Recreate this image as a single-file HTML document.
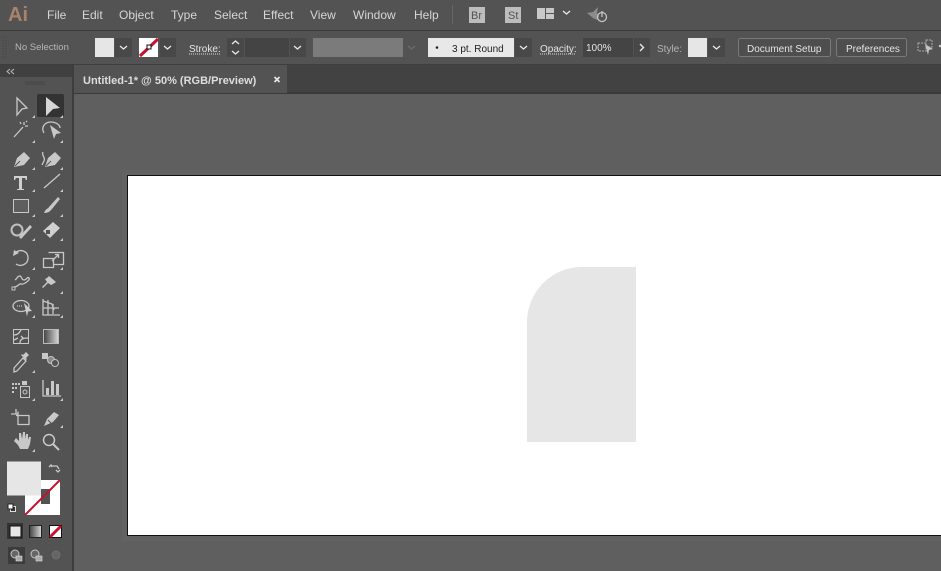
<!DOCTYPE html>
<html><head><meta charset="utf-8"><style>
html,body{margin:0;padding:0;background:#5f5f5f}
svg{display:block}
text{font-family:"Liberation Sans",sans-serif}
.m{font-size:12px;fill:#d6d6d6}
.c{font-size:10px;fill:#e4e4e4}
.i{fill:none;stroke:#c8c8c8;stroke-width:1.3}
.f{fill:#c8c8c8;stroke:none}
.chev{fill:none;stroke:#e6e6e6;stroke-width:1.4}
</style></head><body>
<svg width="941" height="571" viewBox="0 0 941 571" xmlns="http://www.w3.org/2000/svg">
<rect width="941" height="571" fill="#5f5f5f"/>
<!-- menu bar -->
<rect width="941" height="30" fill="#535353"/>
<rect y="30" width="941" height="1" fill="#3c3c3c"/>
<text x="8" y="21" style="font-size:20px;font-weight:bold" fill="#a8836a">Ai</text>
<text class="m" x="47" y="19">File</text>
<text class="m" x="82" y="19">Edit</text>
<text class="m" x="119" y="19">Object</text>
<text class="m" x="171" y="19">Type</text>
<text class="m" x="214" y="19">Select</text>
<text class="m" x="263" y="19">Effect</text>
<text class="m" x="310" y="19">View</text>
<text class="m" x="353" y="19">Window</text>
<text class="m" x="414" y="19">Help</text>
<rect x="452" y="5" width="1" height="19" fill="#666"/>
<rect x="469" y="7" width="16" height="16" fill="#bdbdbd"/>
<text x="471" y="19" style="font-size:11px" fill="#535353">Br</text>
<rect x="505" y="7" width="16" height="16" fill="#bdbdbd"/>
<text x="508" y="19" style="font-size:11px" fill="#535353">St</text>
<path class="f" d="M537 8h8v11h-8zM546 8h8v5h-8zM546 14h8v5h-8z"/>
<path class="chev" d="M563 11l3.500 3 3.500-3"/>
<path d="M587 13l6-1 5-5-1 6 2 3-2 4-4-2z" fill="#8b8b8b"/>
<circle cx="602" cy="17" r="4.500" fill="none" stroke="#c4c4c4" stroke-width="1.300"/>
<path d="M602 11v6" stroke="#c4c4c4" stroke-width="1.300"/>
<!-- control bar -->
<rect y="31" width="941" height="33" fill="#535353"/>
<rect y="64" width="941" height="1" fill="#3e3e3e"/>
<path d="M3 36v24M6 36v24" stroke="#464646" stroke-dasharray="1 1"/>
<text x="15" y="50" style="font-size:9.500px" fill="#b6b6b6">No Selection</text>
<rect x="95" y="38" width="19" height="19" fill="#e6e6e6"/>
<rect x="115" y="38" width="17" height="19" fill="#484848"/>
<path class="chev" d="M120 46l3.500 3 3.500-3"/>
<rect x="139" y="38" width="19" height="19" fill="#fff"/>
<path d="M140 56l18-17" stroke="#c4122f" stroke-width="3"/>
<rect x="147" y="45" width="4" height="4" fill="#fff" stroke="#111"/>
<rect x="160" y="38" width="16" height="19" fill="#484848"/>
<path class="chev" d="M164 46l3.500 3 3.500-3"/>
<text class="c" x="189" y="52">Stroke:</text>
<path d="M189 54h31" stroke="#ddd" stroke-dasharray="1 1"/>
<rect x="227" y="38" width="17" height="19" fill="#484848"/>
<path class="chev" d="M232 44l3.500-3 3.500 3M232 51l3.500 3 3.500-3"/>
<rect x="245" y="38" width="44" height="19" fill="#444"/>
<rect x="290" y="38" width="16" height="19" fill="#484848"/>
<path class="chev" d="M294 46l3.500 3 3.500-3"/>
<rect x="313" y="38" width="90" height="19" fill="#7b7b7b"/>
<path d="M408 46l3.500 3 3.500-3" fill="none" stroke="#6c6c6c" stroke-width="1.400"/>
<rect x="428" y="38" width="86" height="19" fill="#e8e8e8"/>
<circle cx="437" cy="47.500" r="1.300" fill="#222"/>
<text x="452" y="52" style="font-size:10px" fill="#222">3 pt. Round</text>
<rect x="515" y="38" width="17" height="19" fill="#484848"/>
<path class="chev" d="M520 46l3.500 3 3.500-3"/>
<text class="c" x="540" y="52">Opacity:</text>
<path d="M540 54h36" stroke="#ddd" stroke-dasharray="1 1"/>
<rect x="583" y="38" width="50" height="19" fill="#444"/>
<text class="c" x="586" y="51">100%</text>
<rect x="634" y="38" width="16" height="19" fill="#484848"/>
<path class="chev" d="M640 44l3.500 3.500-3.500 3.500"/>
<text x="657" y="52" style="font-size:10px" fill="#b4b4b4">Style:</text>
<rect x="688" y="38" width="19" height="19" fill="#e6e6e6"/>
<rect x="708" y="38" width="17" height="19" fill="#484848"/>
<path class="chev" d="M713 46l3.500 3 3.500-3"/>
<rect x="738.500" y="38.500" width="92" height="18" rx="2" fill="#4e4e4e" stroke="#7a7a7a"/>
<text class="c" x="747" y="52">Document Setup</text>
<rect x="836.500" y="38.500" width="70" height="18" rx="2" fill="#4e4e4e" stroke="#7a7a7a"/>
<text class="c" x="846" y="52">Preferences</text>
<path d="M918 43h8v8h-8zM926 40h6v7h-6z" fill="none" stroke="#aaa" stroke-dasharray="2 1"/>
<path d="M925 44l8 5-4 1-1 5z" fill="#c4c4c4"/>
<circle cx="940" cy="46" r="1.200" fill="#ccc"/>
<!-- tab bar -->
<rect y="65" x="74" width="867" height="28" fill="#424242"/>
<rect y="92" x="74" width="867" height="2" fill="#393939"/>
<rect x="74" y="65" width="213" height="28" fill="#535353"/>
<text x="83" y="84" style="font-size:11px;font-weight:bold" fill="#dedede">Untitled-1* @ 50% (RGB/Preview)</text>
<path d="M274.500 77l5 5M279.500 77l-5 5" stroke="#e8e8e8" stroke-width="1.600"/>
<!-- toolbar -->
<rect y="65" width="72" height="506" fill="#535353"/>
<rect y="65" width="72" height="12" fill="#404040"/>
<rect x="72" y="65" width="2" height="506" fill="#3d3d3d"/>
<path d="M10 69l-3 2.500 3 2.500M14 69l-3 2.500 3 2.500" fill="none" stroke="#bbb"/>
<path d="M26 81v4M28 81v4M30 81v4M32 81v4M34 81v4M36 81v4M38 81v4M40 81v4M42 81v4M44 81v4" stroke="#454545"/>
<rect x="37" y="94" width="27" height="23" rx="2" fill="#333"/>
<!-- row 1 -->
<path class="i" d="M17 98l10 10-5 1-5 6z"/>
<path d="M46 97l14 11-7 1-7 7z" fill="#d6d6d6"/>
<!-- wand / lasso -->
<path class="i" d="M14 137l9-10M24 122v3M28 126h-3M20 122l1 2M27 121l-1 1" stroke-width="2"/>
<path class="i" d="M44 133c-3-5 0-11 7-11 5 0 9 3 9 6"/>
<path d="M50 125l11 8-5 1-2 5z" fill="#c8c8c8"/>
<!-- pen -->
<path class="f" d="M14 167l3-9 7-6 6 6-6 7z"/>
<path d="M15 166l5-5" stroke="#535353"/>
<path class="f" d="M45 167l3-9 7-6 6 6-6 7z"/>
<path d="M46 166l5-5" stroke="#535353"/>
<path class="i" d="M43 152c-2 4 3 5 1 9l-2 4"/>
<!-- type, line -->
<path d="M14 176h13v4h-1l-1-2h-3v11h2v1h-7v-1h2v-11h-3l-1 2h-1z" fill="#cfcfcf"/>
<path class="i" d="M44 188l16-14"/>
<!-- rect, brush -->
<rect x="13.500" y="199.500" width="15" height="13" fill="#5e5e5e" stroke="#c8c8c8"/>
<path d="M44 213c2-5 4-4 5-6l9-10 2 2-8 10c-2 2-3 4-8 4z" fill="#c8c8c8"/>
<!-- blob, eraser -->
<circle cx="17" cy="230" r="5.500" fill="none" stroke="#c0c0c0" stroke-width="2"/>
<path d="M19 237l11-12 2 2-11 12z" fill="#c8c8c8"/>
<path d="M43 231l10-9 7 6-10 10z" fill="#cfcfcf"/>
<rect x="46" y="230" width="4" height="4" fill="#535353"/>
<!-- rotate, scale -->
<path class="i" d="M16 252c5-3 12-1 12 6s-8 9-12 6" stroke-width="1.600"/>
<path class="f" d="M13 256l1-6 5 3z"/>
<path class="i" d="M43.500 258.500h10v9h-10zM48.500 252.500h15v12h-10"/>
<path class="i" d="M52 261l6-6M55 254.500h3.500v3.500"/>
<!-- width, pin -->
<path class="i" d="M15 280c3-2 2-4 5-4 2 0 1 4 4 4 3 0 3-4 5-2s-6 7-8 6-3 3-7 3" stroke-width="2"/>
<rect x="12" y="287" width="3" height="3" fill="#535353" stroke="#ddd" stroke-width=".8"/>
<path class="f" d="M49 276l7 6-3 2-2 1-3-2-5 5-1-1 5-5-2-3 2-1z"/>
<!-- shape builder, perspective -->
<ellipse cx="21" cy="306" rx="8" ry="5.500" class="i"/>
<path d="M24 303l8 8-4 .5-1 5z" fill="#cfcfcf"/>
<path d="M17 306h6" stroke="#ddd" stroke-dasharray="1 1"/>
<path class="i" d="M43 299v16h17M43 301l9 3 2 6M48 300v15M53 304v10M43 308h16" stroke-width="1"/>
<!-- mesh, gradient -->
<rect x="13.500" y="329.500" width="15" height="14" fill="none" stroke="#c8c8c8"/>
<path class="i" d="M14 335c4 0 5-2 7-5M20 343c0-4 3-5 8-5M21 336l3 3M14 340l4-2" stroke-width="1"/>
<defs><linearGradient id="g" x1="0" x2="1"><stop offset="0" stop-color="#424242"/><stop offset="1" stop-color="#d8d8d8"/></linearGradient></defs>
<rect x="43.500" y="329.500" width="15" height="14" fill="url(#g)" stroke="#bbb"/>
<!-- eyedropper, blend -->
<path class="i" d="M14 368l9-10 3 3-9 10-3 1z"/>
<path class="f" d="M23 355l3-3 3 3-3 3 1 1-1 1-5-5 1-1z"/>
<rect x="42" y="353" width="6" height="6" fill="#c8c8c8"/>
<circle cx="51" cy="360" r="3.500" fill="#8a8a8a" stroke="#c4c4c4"/>
<circle cx="55" cy="363" r="3.500" fill="#535353" stroke="#c4c4c4"/>
<!-- symbol, graph -->
<path d="M12 383h2v2h-2zM15 383h2v2h-2zM18 383h2v2h-2zM12 387h2v2h-2zM15 387h2v2h-2zM12 391h2v2h-2z" fill="#c8c8c8"/>
<rect x="20.500" y="386.500" width="9" height="11" fill="none" stroke="#c8c8c8"/>
<circle cx="25" cy="392" r="2" fill="none" stroke="#c8c8c8"/>
<path class="f" d="M22 381h5v4h-5z"/>
<path class="i" d="M43 380v16h18"/>
<path class="f" d="M46 388h3v7h-3zM51 381h3v14h-3zM56 384h3v11h-3z"/>
<!-- artboard, knife -->
<path class="i" d="M16 415.500h13v9h-11v-13M11 414h7M16 409v5"/>
<path class="f" d="M44 426l3-7 7-7 5 3-6 7z"/>
<path d="M48 420l3 3" stroke="#535353"/>
<!-- hand, zoom -->
<path class="f" d="M14 441l4 4 2 4h8l2-5 1-7-2 0-1 3v-6h-2l-1 5v-7h-2l-1 7-1-6h-2l0 8-3-3z"/>
<circle cx="49" cy="440" r="5.500" fill="none" stroke="#c8c8c8" stroke-width="1.500"/>
<path d="M53 444l6 6" stroke="#c8c8c8" stroke-width="2"/>
<!-- corner triangles -->
<path fill="#c8c8c8" d="M35 115l-3 3h3zM63 115l-3 3h3zM35 140l-3 3h3zM63 140l-3 3h3zM35 167l-3 3h3zM63 167l-3 3h3zM35 189l-3 3h3zM63 189l-3 3h3zM35 214l-3 3h3zM63 214l-3 3h3zM35 238l-3 3h3zM63 238l-3 3h3zM35 267l-3 3h3zM63 267l-3 3h3zM35 291l-3 3h3zM63 291l-3 3h3zM35 315l-3 3h3zM63 315l-3 3h3zM35 370l-3 3h3zM35 398l-3 3h3zM63 398l-3 3h3zM63 425l-3 3h3zM35 449l-3 3h3z"/>
<!-- fill / stroke -->
<rect x="25" y="480" width="35" height="35" fill="#fff"/>
<rect x="41" y="489" width="9" height="15" fill="#535353"/>
<path d="M25 515l35-35" stroke="#c4122f" stroke-width="2"/>
<rect x="7" y="461.500" width="34" height="34" fill="#e6e6e6"/>
<path class="i" d="M51 466h6l2 3M60 470l-2 2-2-2M49 467l2-2 1 2" stroke-width="1.200"/>
<rect x="10.500" y="506.500" width="5" height="5" fill="#333" stroke="#ddd"/>
<rect x="8" y="504" width="5" height="5" fill="#fff" stroke="#222"/>
<!-- mode -->
<rect x="7" y="523" width="16" height="16" fill="#333"/>
<rect x="10" y="526" width="11" height="11" fill="#e6e6e6" stroke="#111"/>
<rect x="29.500" y="525.500" width="12" height="12" fill="url(#g)" stroke="#222"/>
<rect x="49.500" y="525.500" width="12" height="12" fill="#fff" stroke="#111"/>
<path d="M50 537l11-11" stroke="#c4122f" stroke-width="3"/>
<!-- draw modes -->
<rect x="8" y="547" width="17" height="17" fill="#3c3c3c"/>
<circle cx="15" cy="554" r="4" fill="#666" stroke="#c4c4c4"/>
<rect x="16" y="556" width="6" height="5" fill="#aaa" stroke="#ddd" stroke-width=".6"/>
<circle cx="35" cy="554" r="4" fill="#666" stroke="#c4c4c4"/>
<rect x="36" y="556" width="6" height="5" fill="#aaa" stroke="#ddd" stroke-width=".6"/>
<circle cx="56" cy="555" r="4" fill="#666" stroke="#6f6f6f"/>
<!-- artboard -->
<rect x="122" y="170" width="819" height="371" fill="#626262"/>
<rect x="127.500" y="175.500" width="814" height="360" fill="#fff" stroke="#111"/>
<path d="M527 442V322a55 55 0 0 1 55-55h54v175z" fill="#e6e6e6"/>
</svg>
</body></html>
